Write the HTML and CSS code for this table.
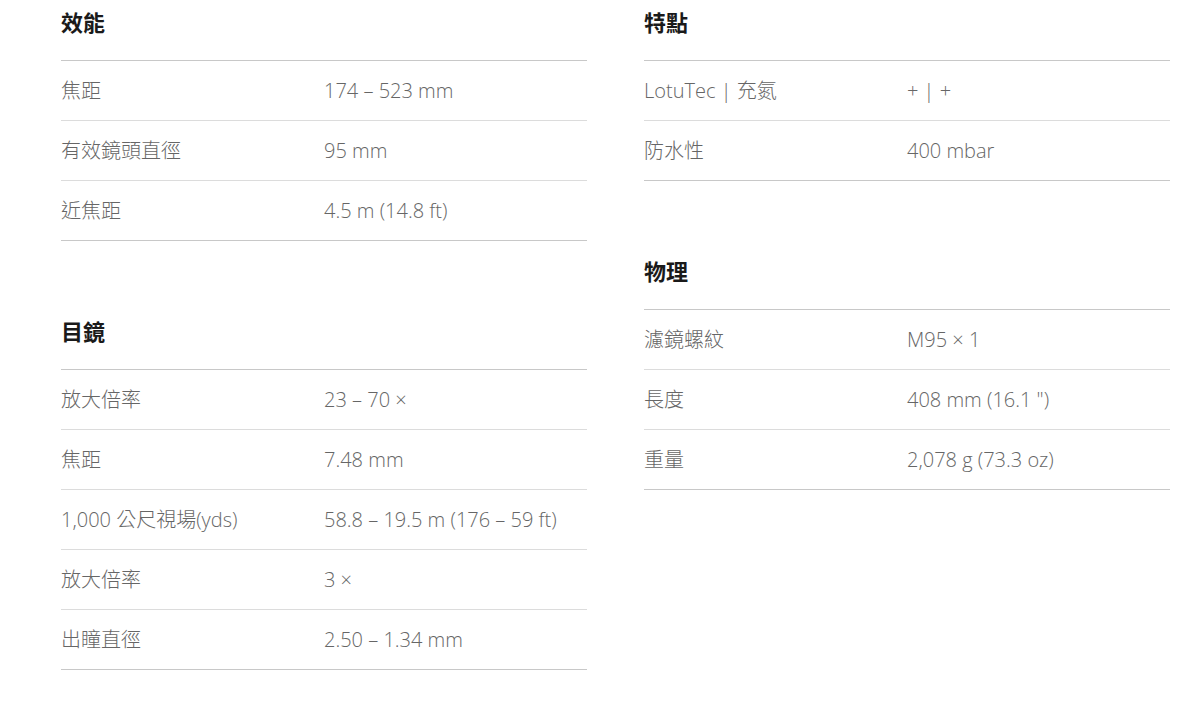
FILE: index.html
```html
<!DOCTYPE html>
<html lang="zh-Hant">
<head>
<meta charset="utf-8">
<link rel="stylesheet" href="styles.css">
</head>
<body>
<div class="specs">
  <div class="col">
    <section class="group">
      <h2 class="title">效能</h2>
      <div class="row"><span class="label">焦距</span><span class="value">174 – 523 mm</span></div>
      <div class="row"><span class="label">有效鏡頭直徑</span><span class="value">95 mm</span></div>
      <div class="row"><span class="label">近焦距</span><span class="value">4.5 m (14.8 ft)</span></div>
    </section>
    <section class="group">
      <h2 class="title">目鏡</h2>
      <div class="row"><span class="label">放大倍率</span><span class="value">23 – 70 ×</span></div>
      <div class="row"><span class="label">焦距</span><span class="value">7.48 mm</span></div>
      <div class="row"><span class="label">1,000 公尺視場(yds)</span><span class="value">58.8 – 19.5 m (176 – 59 ft)</span></div>
      <div class="row"><span class="label">放大倍率</span><span class="value">3 ×</span></div>
      <div class="row"><span class="label">出瞳直徑</span><span class="value">2.50 – 1.34 mm</span></div>
    </section>
  </div>
  <div class="col">
    <section class="group">
      <h2 class="title">特點</h2>
      <div class="row"><span class="label">LotuTec | 充氮</span><span class="value">+ | +</span></div>
      <div class="row"><span class="label">防水性</span><span class="value">400 mbar</span></div>
    </section>
    <section class="group">
      <h2 class="title">物理</h2>
      <div class="row"><span class="label">濾鏡螺紋</span><span class="value">M95 × 1</span></div>
      <div class="row"><span class="label">長度</span><span class="value">408 mm (16.1 ")</span></div>
      <div class="row"><span class="label">重量</span><span class="value">2,078 g (73.3 oz)</span></div>
    </section>
  </div>
</div>
</body>
</html>
```

FILE: styles.css
```css
html, body {
  margin: 0;
  padding: 0;
  background: #fff;
}
body {
  font-family: "Open Sans", "Noto Sans CJK TC", sans-serif;
  color: #666;
}
.specs {
  display: grid;
  grid-template-columns: 526px 526px;
  column-gap: 57px;
  padding-left: 61px;
}
.group + .group {
  margin-top: 68px;
}
.title {
  margin: 0;
  padding: 7px 0 23px;
  line-height: 30px;
  font-size: 22px;
  font-weight: 700;
  color: #1a1a1a;
  border-bottom: 1px solid #c8c8c8;
}
.row {
  display: grid;
  grid-template-columns: 1fr 1fr;
  height: 59px;
  line-height: 59px;
  align-items: start;
  border-bottom: 1px solid #dcdcdc;
  font-size: 20px;
  font-weight: 300;
}
.row:last-child {
  border-bottom-color: #c8c8c8;
}
.label, .value {
  white-space: nowrap;
}
```
